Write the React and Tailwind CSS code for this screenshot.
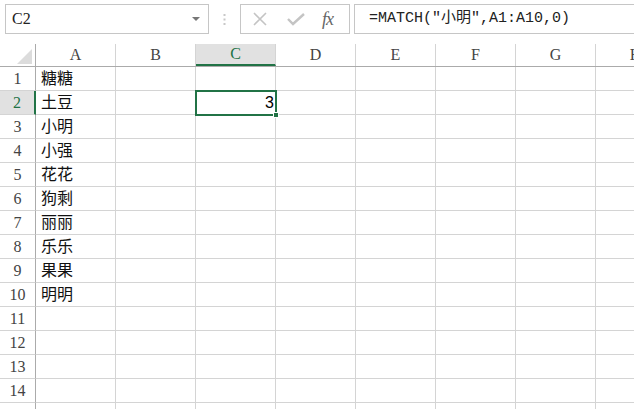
import React from 'react';

const cols = ['A', 'B', 'C', 'D', 'E', 'F', 'G', 'H'];
const names = ['糖糖', '土豆', '小明', '小强', '花花', '狗剩', '丽丽', '乐乐', '果果', '明明'];
const rows = Array.from({ length: 15 }, (_, i) => i + 1);

function Cell({ row, col }) {
  const selected = row === 2 && col === 'C';
  let content = null;
  if (col === 'A' && row <= 10) {
    content = <span className="pl-[5px] text-[16px] text-[#111]">{names[row - 1]}</span>;
  }
  return (
    <div className="relative w-[80px] shrink-0 h-full border-r border-b border-[#d4d4d4] flex items-center">
      {content}
      {selected && (
        <div className="absolute -left-[1px] -top-[1px] w-[82px] h-[26px] border-2 border-[#217346] z-10 flex items-center justify-end pr-[1px]">
          <span className="font-['Liberation_Sans'] text-[16px] text-black">3</span>
          <div className="absolute -right-[4px] -bottom-[4px] w-[6px] h-[6px] bg-[#217346] border border-white"></div>
        </div>
      )}
    </div>
  );
}

export default function App() {
  return (
    <div className="w-[634px] h-[409px] bg-white overflow-hidden font-['Liberation_Serif','Noto_Sans_CJK_SC',serif]">
      {/* formula bar */}
      <div className="flex items-start pt-[4px] h-[40px]">
        <div className="ml-[5px] w-[204px] shrink-0 h-[30px] border border-[#c6c6c6] flex items-center justify-between pl-[6px] pr-[8px]">
          <span className="text-[16px] text-[#222]">C2</span>
          <svg width="8" height="5" viewBox="0 0 8 5"><path d="M0 0 L8 0 L4 4 Z" fill="#777" /></svg>
        </div>
        <div className="w-[31px] shrink-0 h-[30px] flex items-center justify-center">
          <svg width="3" height="11" viewBox="0 0 3 11">
            <rect x="0.5" y="0" width="2" height="2" fill="#c8c8c8" />
            <rect x="0.5" y="4.5" width="2" height="2" fill="#c8c8c8" />
            <rect x="0.5" y="9" width="2" height="2" fill="#c8c8c8" />
          </svg>
        </div>
        <div className="w-[110px] shrink-0 h-[30px] border border-[#c6c6c6] flex items-center pl-[11px]">
          <svg width="16" height="16" viewBox="0 0 16 16"><path d="M2 2 L14 14 M14 2 L2 14" stroke="#c4c4c4" strokeWidth="1.6" /></svg>
          <svg className="ml-[19px]" width="18" height="14" viewBox="0 0 18 14"><path d="M1 7 L6 12 L17 2" stroke="#c4c4c4" strokeWidth="2.4" fill="none" /></svg>
          <span className="ml-[17px] italic text-[18px] text-[#666] font-['Liberation_Serif'] tracking-[-1px]">fx</span>
        </div>
        <div className="ml-[4px] w-[300px] shrink-0 h-[30px] border border-[#c6c6c6] flex items-center pl-[14px]">
          <span className="font-['Liberation_Mono','Noto_Sans_CJK_SC',monospace] text-[15px] text-[#222] whitespace-nowrap">=MATCH("小明",A1:A10,0)</span>
        </div>
      </div>

      {/* column headers */}
      <div className="flex h-[23px] border-b border-[#ababab] mt-[4px]">
        <div className="w-[36px] shrink-0 h-full border-r border-[#ababab] flex items-end justify-end pr-[3px] pb-[2px]">
          <svg width="15" height="15" viewBox="0 0 15 15"><path d="M15 0 L15 15 L0 15 Z" fill="#dcdcdc" /></svg>
        </div>
        {cols.map((c) => (
          <div
            key={c}
            className={
              c === 'C'
                ? 'w-[80px] shrink-0 h-full bg-[#e1e1e1] border-r border-[#d4d4d4] border-b-2 border-b-[#217346] flex items-center justify-center text-[16px] text-[#217346]'
                : 'w-[80px] shrink-0 h-full border-r border-[#d4d4d4] flex items-center justify-center text-[16px] text-[#444]'
            }
          >
            {c}
          </div>
        ))}
      </div>

      {/* rows */}
      {rows.map((r) => (
        <div key={r} className="flex h-[24px]">
          <div
            className={
              r === 2
                ? 'w-[36px] shrink-0 h-full bg-[#e1e1e1] border-b border-[#d4d4d4] border-r-2 border-r-[#217346] flex items-center justify-center text-[16px] text-[#217346]'
                : 'w-[36px] shrink-0 h-full border-b border-[#d4d4d4] border-r border-r-[#ababab] flex items-center justify-center text-[16px] text-[#444]'
            }
          >
            {r <= 14 ? r : ''}
          </div>
          {cols.map((c) => (
            <Cell key={c} row={r} col={c} />
          ))}
        </div>
      ))}
    </div>
  );
}
